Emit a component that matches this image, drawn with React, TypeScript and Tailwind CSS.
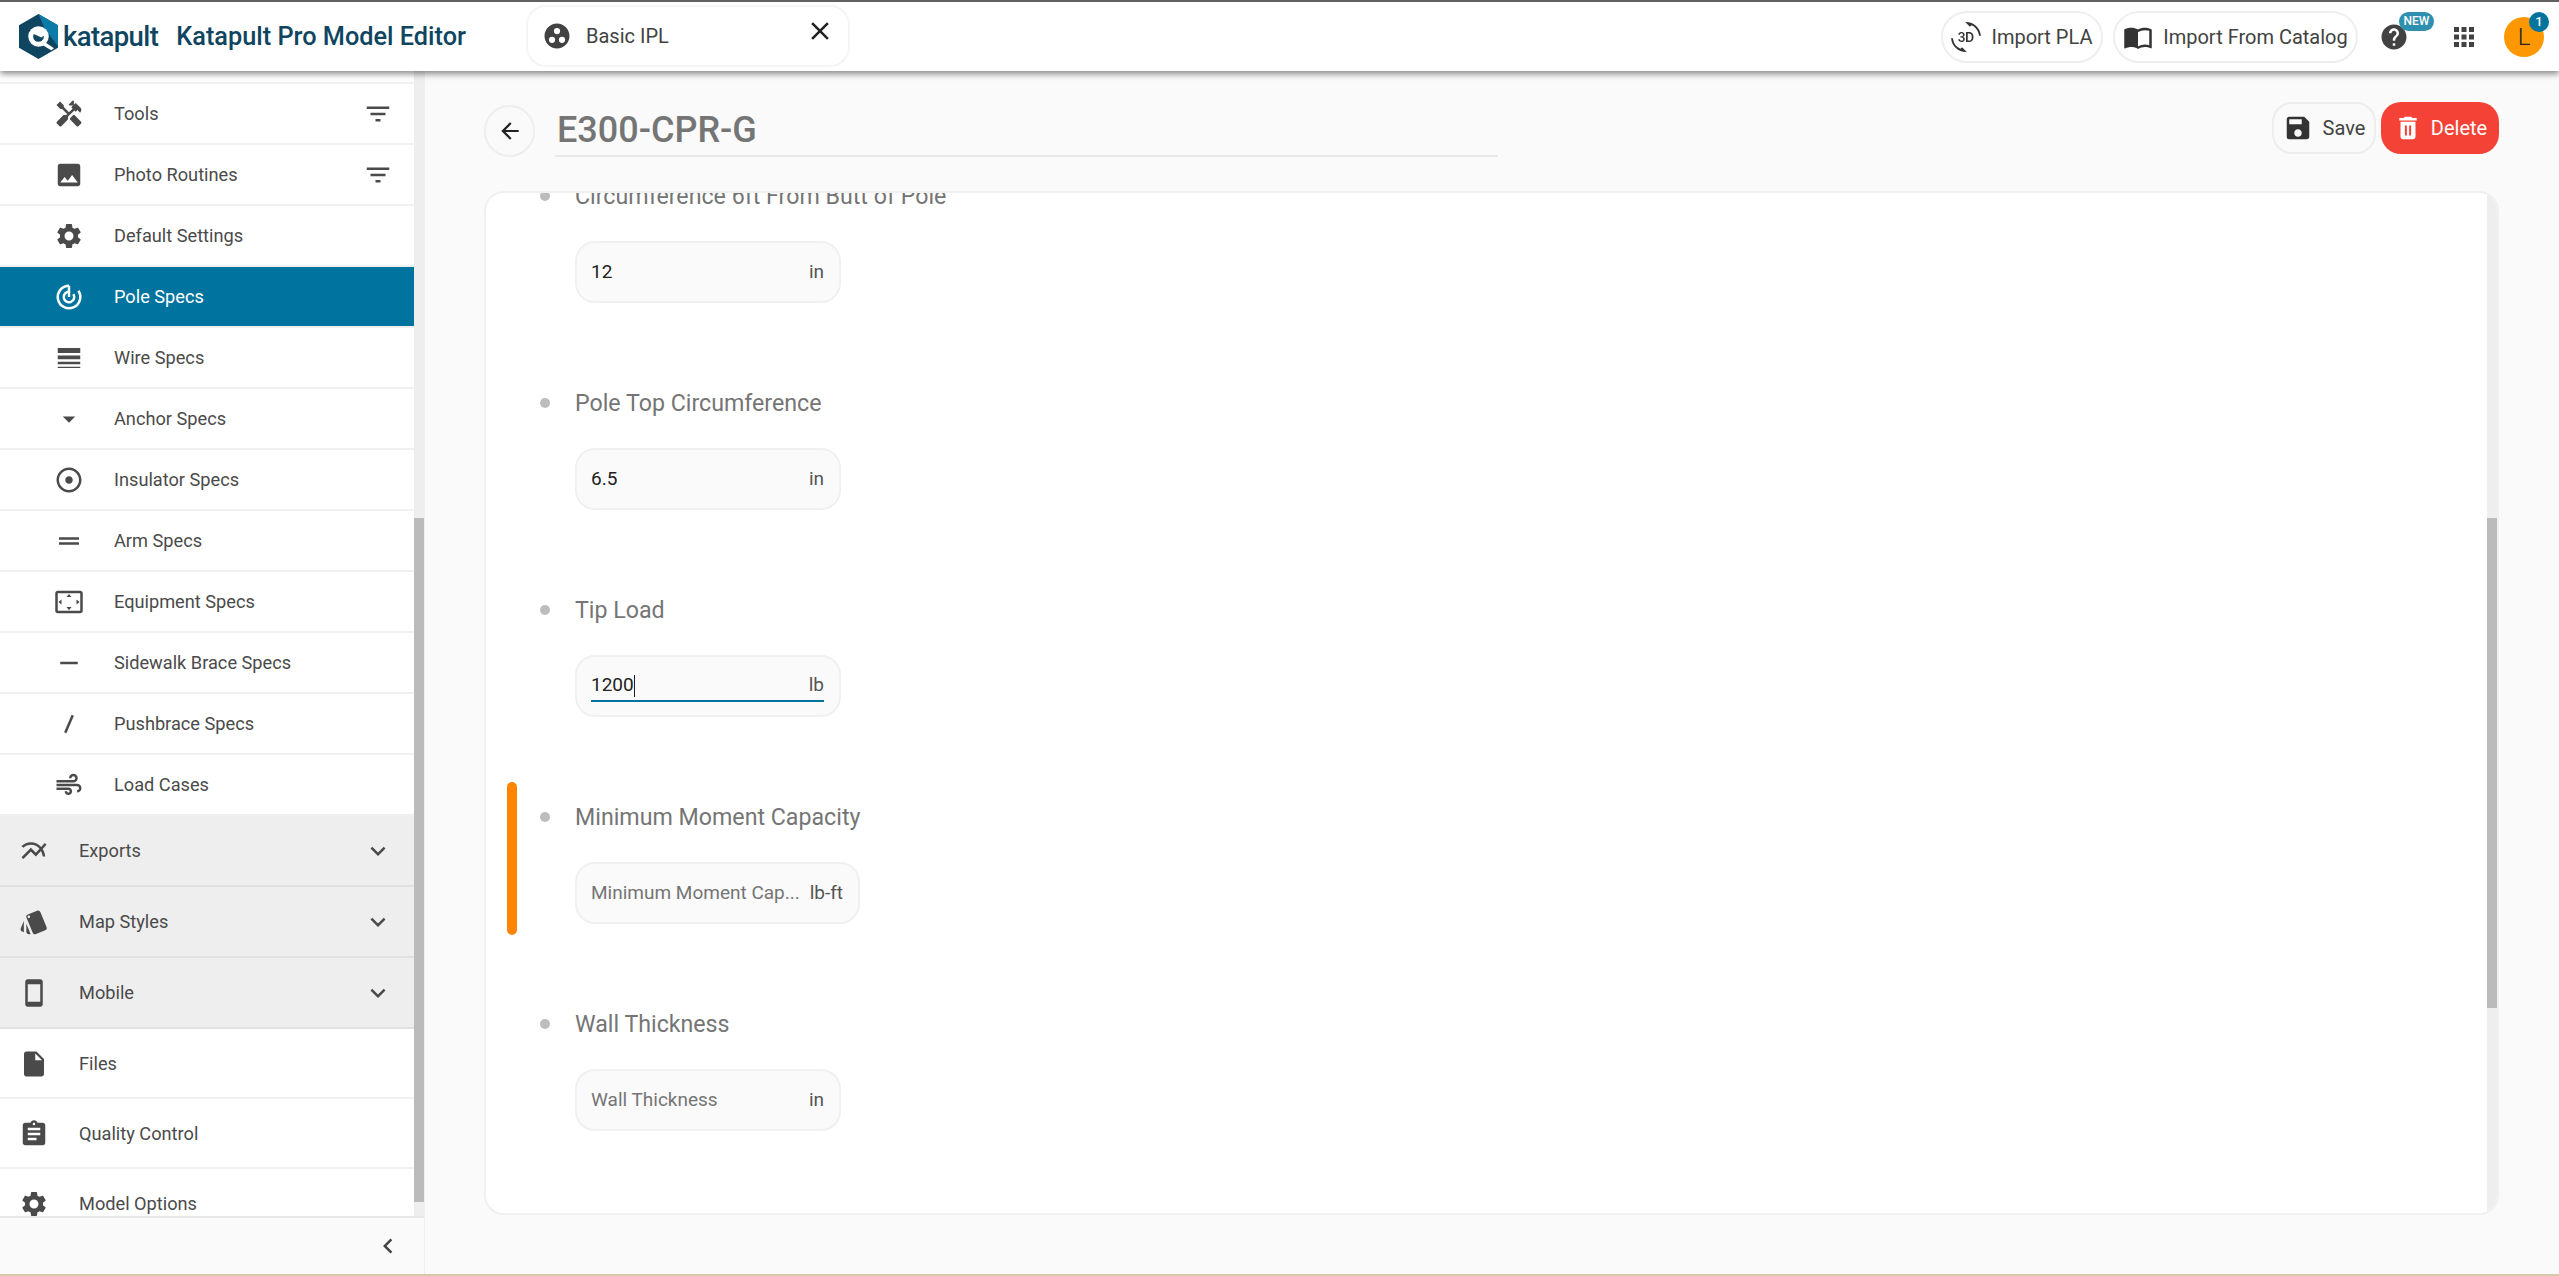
import React from 'react';
import {
  Md3dRotation,
  MdAdjust,
  MdAir,
  MdApps,
  MdArrowBack,
  MdArrowDropDown,
  MdAssignment,
  MdChevronLeft,
  MdClose,
  MdDragHandle,
  MdExpandMore,
  MdFilterList,
  MdGroupWork,
  MdHandyman,
  MdHelp,
  MdImage,
  MdImportContacts,
  MdInsertDriveFile,
  MdLineWeight,
  MdMultilineChart,
  MdRemove,
  MdSave,
  MdSettings,
  MdSettingsOverscan,
  MdSmartphone,
  MdStyle,
} from 'react-icons/md';

const SlashIcon = ({ className }: { className?: string }) => (
  <svg viewBox="0 0 24 24" className={className} fill="none" stroke="currentColor" strokeWidth="2">
    <path d="M15 5 L9 19" />
  </svg>
);

const PoleIcon = ({ className }: { className?: string }) => (
  <svg viewBox="0 0 24 24" className={className} fill="none" stroke="currentColor" strokeWidth="2">
    <path d="M12 3 A9 9 0 1 0 19.500 7" />
    <path d="M12 7.800 A4.200 4.200 0 1 0 15.500 9.700" />
    <path d="M12 3 V12" />
  </svg>
);

const TrashIcon = ({ className }: { className?: string }) => (
  <svg viewBox="0 0 24 24" className={className}>
    <path fill="currentColor" d="M6 19c0 1.1.9 2 2 2h8c1.1 0 2-.9 2-2V7H6v12zM19 4h-3.5l-1-1h-5l-1 1H5v2h14V4z" />
    <path fill="#f44336" d="M9.5 10h1.6v8H9.500zM12.900 10h1.600v8h-1.600z" />
  </svg>
);

const Logo = () => (
  <svg viewBox="0 0 40 46" className="w-[39px] h-[45px] shrink-0">
    <path d="M20 0 L40 11.500 V34.500 L20 46 L0 34.500 V11.500 Z" fill="#0f4560" />
    <path d="M20 0 L40 11.500 V33 L26 14 Z" fill="#0b7ca8" />
    <circle cx="20" cy="23" r="10.500" fill="#ffffff" />
    <circle cx="20" cy="23" r="5.500" fill="#0f4560" />
    <path d="M14 20 C18 15 24 17 27 21 L23 24 Z" fill="#ffffff" />
    <path d="M24 27 L36 35 L33 37 L21 30 Z" fill="#ffffff" />
  </svg>
);

const specRows = [
  { label: 'Tools', icon: MdHandyman, filter: true },
  { label: 'Photo Routines', icon: MdImage, filter: true },
  { label: 'Default Settings', icon: MdSettings },
  { label: 'Pole Specs', icon: PoleIcon, active: true },
  { label: 'Wire Specs', icon: MdLineWeight },
  { label: 'Anchor Specs', icon: MdArrowDropDown },
  { label: 'Insulator Specs', icon: MdAdjust },
  { label: 'Arm Specs', icon: MdDragHandle },
  { label: 'Equipment Specs', icon: MdSettingsOverscan },
  { label: 'Sidewalk Brace Specs', icon: MdRemove },
  { label: 'Pushbrace Specs', icon: SlashIcon },
  { label: 'Load Cases', icon: MdAir },
];

const groups = [
  { label: 'Exports', icon: MdMultilineChart },
  { label: 'Map Styles', icon: MdStyle },
  { label: 'Mobile', icon: MdSmartphone },
];

const links = [
  { label: 'Files', icon: MdInsertDriveFile },
  { label: 'Quality Control', icon: MdAssignment },
  { label: 'Model Options', icon: MdSettings },
];

const fields = [
  { label: 'Circumference 6ft From Butt of Pole', value: '12', unit: 'in' },
  { label: 'Pole Top Circumference', value: '6.5', unit: 'in' },
  { label: 'Tip Load', value: '1200', unit: 'lb', focused: true },
  { label: 'Minimum Moment Capacity', placeholder: 'Minimum Moment Cap...', unit: 'lb-ft', flagged: true },
  { label: 'Wall Thickness', placeholder: 'Wall Thickness', unit: 'in' },
];

const Sidebar = () => (
  <aside className="w-[425px] shrink-0 flex flex-col border-r border-[#eeeeee] bg-white">
    <div className="flex-1 flex min-h-0">
      <div className="w-[414px] shrink-0 overflow-hidden">
        <div className="h-[13px] border-b-2 border-[#f0f0f0]" />
        {specRows.map((row) => {
          const Icon = row.icon;
          return (
            <div
              key={row.label}
              className={`h-[61px] flex items-center pl-[54px] pr-[21px] border-b-2 border-[#f0f0f0] ${
                row.active ? 'bg-[#00739f] text-white' : 'text-[#4a4a4a]'
              }`}
            >
              <div className="w-[30px] flex justify-center">
                <Icon className="w-[30px] h-[30px]" />
              </div>
              <span className="ml-[30px] flex-1 text-[18.2px]">{row.label}</span>
              {row.filter && <MdFilterList className="w-[30px] h-[30px]" />}
            </div>
          );
        })}
        {groups.map((group) => {
          const Icon = group.icon;
          return (
            <div key={group.label} className="h-[71px] flex items-center pt-[1px] pl-[19px] pr-[21px] bg-[#eeeeee] border-b-2 border-[#e0e0e0] text-[#4a4a4a]">
              <Icon className="w-[30px] h-[30px]" />
              <span className="ml-[30px] flex-1 text-[18.2px]">{group.label}</span>
              <MdExpandMore className="w-[30px] h-[30px]" />
            </div>
          );
        })}
        {links.map((link) => {
          const Icon = link.icon;
          return (
            <div key={link.label} className="h-[70px] flex items-center pt-[1px] pl-[19px] border-b-2 border-[#f0f0f0] text-[#4a4a4a]">
              <Icon className="w-[30px] h-[30px]" />
              <span className="ml-[30px] text-[18.2px]">{link.label}</span>
            </div>
          );
        })}
      </div>
      <div className="w-[10px] flex flex-col bg-[#eeeeee] pt-[447px] pb-[14px]">
        <div className="flex-1 bg-[#bbbbbb]" />
      </div>
    </div>
    <div className="h-[58px] shrink-0 flex items-center justify-end pr-[21px] bg-[#fafafa] border-t-2 border-[#e8e8e8] text-[#424242]">
      <MdChevronLeft className="w-[30px] h-[30px]" />
    </div>
  </aside>
);

const Field = ({ field }: { field: (typeof fields)[number] }) => (
  <div className="h-[207px] shrink-0 relative">
    {field.flagged && <div className="absolute left-[21px] top-[-22px] w-[10px] h-[153px] rounded-full bg-[#ff8400]" />}
    <div className="flex items-center h-[26px]">
      <div className="w-[10px] h-[10px] rounded-full bg-[#bdbdbd] ml-[54px]" />
      <span className="ml-[25px] text-[23.2px] text-[#757575]">{field.label}</span>
    </div>
    <div
      className={`mt-[32px] ml-[89px] h-[62px] rounded-[20px] border-2 border-[#f0f0f0] bg-[#fafafa] pl-[14px] pr-[15px] inline-flex items-center text-[19px] ${
        field.flagged ? 'w-[285px]' : 'w-[266px]'
      }`}
    >
      <div className={`flex-1 flex items-center h-[32px] ${field.focused ? 'border-b-2 border-[#00739f]' : ''}`}>
        <span className={`flex-1 whitespace-nowrap overflow-hidden ${field.value ? 'text-[#212121]' : 'text-[#757575]'}`}>
          {field.value ?? field.placeholder}
          {field.focused && <span className="inline-block w-[1px] h-[22px] bg-[#212121] align-middle" />}
        </span>
        <span className="text-[#555555]">{field.unit}</span>
      </div>
    </div>
  </div>
);

export default function App() {
  return (
    <div
      className="h-[1276px] w-[2559px] overflow-hidden flex flex-col bg-[#fafafa] border-b-2 border-[#d6c9a8]"
      style={{ fontFamily: 'Roboto, sans-serif' }}
    >
      <header className="h-[71px] shrink-0 z-10 relative flex items-center bg-white border-t-2 border-[#616161] shadow-[0_3px_6px_rgba(0,0,0,0.45)]">
        <div className="ml-[19px] flex items-center">
          <Logo />
          <span className="ml-[5px] text-[27.5px] font-medium text-[#0f4560] tracking-[-0.6px]">katapult</span>
          <span className="ml-[18px] text-[25.3px] font-medium text-[#0f4560]">Katapult Pro Model Editor</span>
        </div>
        <div className="absolute left-[526px] top-[3px] w-[324px] h-[62px] rounded-[20px] border-2 border-[#f5f5f5] flex items-center pl-[14px]">
          <MdGroupWork className="w-[30px] h-[30px] text-[#424242]" />
          <span className="ml-[14px] text-[20px] text-[#424242]">Basic IPL</span>
          <MdClose className="absolute right-[13px] top-[9px] w-[30px] h-[30px] text-[#212121]" />
        </div>
        <div className="ml-auto flex items-center">
          <button className="h-[52px] w-[162px] rounded-[26px] border-2 border-[#eeeeee] flex items-center justify-center gap-[10px] text-[20px] text-[#424242]">
            <Md3dRotation className="w-[30px] h-[30px] text-[#333333]" />
            Import PLA
          </button>
          <button className="ml-[10px] h-[52px] w-[245px] rounded-[26px] border-2 border-[#eeeeee] flex items-center justify-center gap-[10px] text-[20px] text-[#424242] whitespace-nowrap">
            <MdImportContacts className="w-[30px] h-[30px] text-[#333333]" />
            Import From Catalog
          </button>
          <div className="relative ml-[21px] w-[30px] h-[30px] text-[#424242]">
            <MdHelp className="w-[30px] h-[30px]" />
            <span className="absolute left-[20px] top-[-10px] w-[35px] h-[19px] rounded-full bg-[#2f8fb0] text-white text-[12px] font-medium flex items-center justify-center">NEW</span>
          </div>
          <MdApps className="ml-[40px] w-[30px] h-[30px] text-[#424242]" />
          <div className="relative ml-[25px] mr-[15px] w-[40px] h-[40px] rounded-full bg-[#ff9800] text-[#212121] text-[24px] font-light flex items-center justify-center">
            L
            <span className="absolute right-[-5px] top-[-5px] w-[20px] h-[20px] rounded-full bg-[#00739f] text-white text-[13px] font-medium flex items-center justify-center">1</span>
          </div>
        </div>
      </header>

      <div className="flex-1 min-h-0 flex">
        <Sidebar />
        <main className="flex-1 min-w-0 flex flex-col pl-[59px] pr-[60px]">
          <div className="h-[120px] shrink-0 flex items-center">
            <button className="w-[51px] h-[52px] shrink-0 rounded-full border-2 border-[#eeeeee] flex items-center justify-center text-[#212121]">
              <MdArrowBack className="w-[26px] h-[26px]" />
            </button>
            <div className="ml-[20px] w-[943px] h-[52px] border-b-2 border-[#e8e8e8] flex items-center">
              <span className="ml-[2px] text-[36px] font-medium text-[#757575]">E300-CPR-G</span>
            </div>
            <button className="ml-auto mb-[6px] h-[52px] w-[104px] rounded-[20px] border-2 border-[#eeeeee] flex items-center justify-center gap-[10px] text-[20px] text-[#424242]">
              <MdSave className="w-[30px] h-[30px] text-[#333333]" />
              Save
            </button>
            <button className="ml-[5px] mb-[6px] h-[52px] w-[118px] rounded-[20px] bg-[#f44336] flex items-center justify-center gap-[8px] text-[20px] text-white">
              <TrashIcon className="w-[30px] h-[30px]" />
              Delete
            </button>
          </div>
          <section className="h-[1024px] shrink-0 flex rounded-[20px] border-2 border-[#f0f0f0] bg-white overflow-hidden">
            <div className="flex-1 overflow-hidden">
              <div className="mt-[-10px]">
                {fields.map((field) => (
                  <Field key={field.label} field={field} />
                ))}
              </div>
            </div>
            <div className="w-[10px] shrink-0 bg-[#eeeeee] pt-[325px] pb-[205px] flex flex-col">
              <div className="flex-1 bg-[#bbbbbb]" />
            </div>
          </section>
        </main>
      </div>
    </div>
  );
}
